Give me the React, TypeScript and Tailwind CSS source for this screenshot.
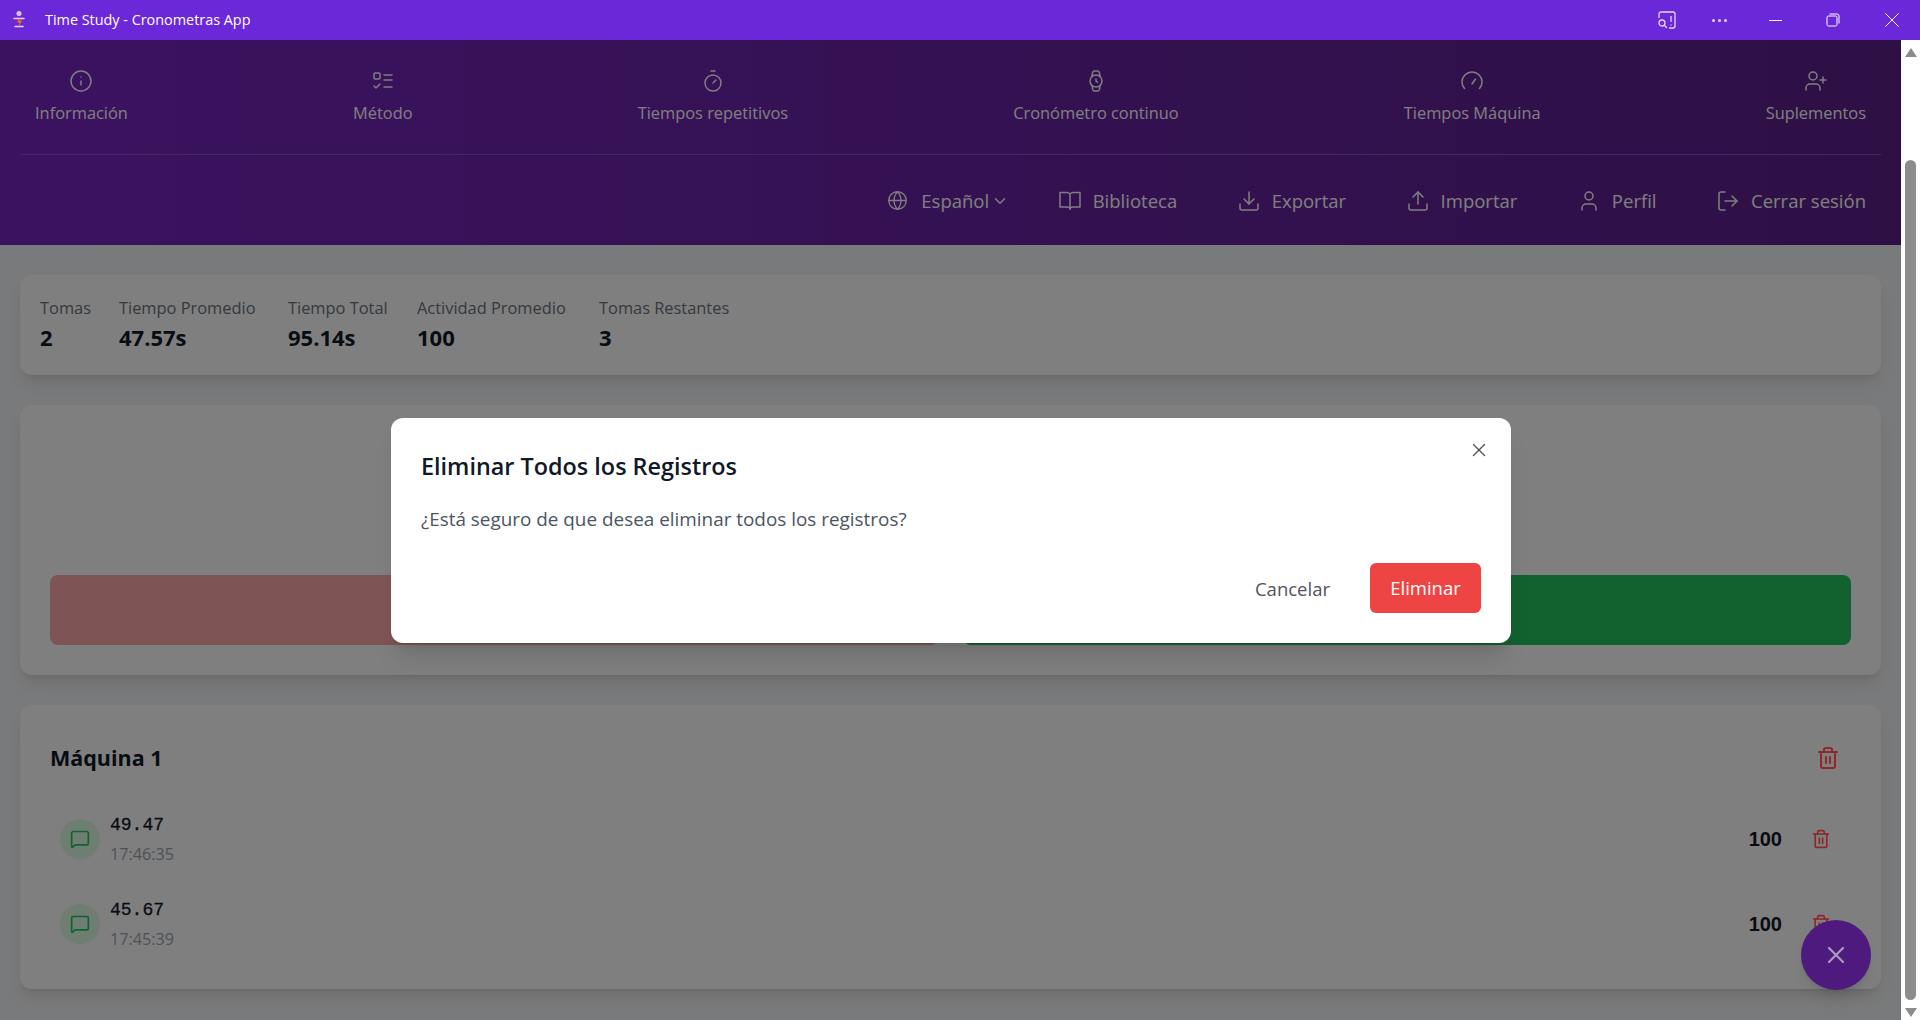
import { ChevronDown, Download, Globe, Info, LogOut, MessageSquare, Timer, Trash2, Upload, User, UserPlus, Watch, X } from "lucide-react";
import type { ReactNode } from "react";

const MethodIcon = () => (
  <svg width="24" height="24" viewBox="0 0 24 24" fill="none" stroke="currentColor" strokeWidth="1.5" strokeLinecap="round" strokeLinejoin="round">
    <rect x="3" y="4" width="6" height="6" rx="1" />
    <path d="M3 17l2 2 4-4" />
    <path d="M13 6h8M13 11h8M13 18h8" />
  </svg>
);

const GaugeIcon = () => (
  <svg width="24" height="24" viewBox="0 0 24 24" fill="none" stroke="currentColor" strokeWidth="1.5" strokeLinecap="round">
    <path d="M4.5 19.5a10 10 0 1 1 15 0" />
    <path d="M12 15l3.5-5" />
  </svg>
);

const BookIcon = () => (
  <svg width="24" height="24" viewBox="0 0 24 24" fill="none" stroke="currentColor" strokeWidth="1.5" strokeLinejoin="round">
    <path d="M12 5v16M12 5c-1-1-2-1.500-3-1.500H2V18h7c1 0 2.500.5 3 1.500.5-1 2-1.500 3-1.500h7V3.500h-7c-1 0-2 .5-3 1.500z" />
  </svg>
);

const AppLogo = () => (
  <svg width="14" height="20" viewBox="0 0 14 20" fill="none">
    <circle cx="7" cy="3.500" r="2.500" fill="#d8c8f0" />
    <path d="M2 8.500h10M3 16.500h8" stroke="#e4daf5" strokeWidth="1.500" strokeLinecap="round" />
    <path d="M8 6.500l-3 6h2.500L6 18l4-7.500H7.500z" fill="#f97316" />
  </svg>
);

const TopTab = ({ icon, label }: { icon: ReactNode; label: string }) => (
  <div className="flex flex-col items-center gap-2 text-white">
    {icon}
    <span className="text-[16.4px] leading-6">{label}</span>
  </div>
);

const SubLink = ({ icon, label }: { icon: ReactNode; label: string }) => (
  <div className="flex items-center gap-[11px] text-white">
    {icon}
    <span className="text-[18.5px] leading-6">{label}</span>
  </div>
);

const Stat = ({ label, value }: { label: string; value: string }) => (
  <div>
    <div className="text-[16.4px] leading-6 text-[#6b7280] whitespace-nowrap">{label}</div>
    <div className="mt-[3px] text-[22px] leading-7 font-bold text-[#111827]">{value}</div>
  </div>
);

const Record = ({ value, time }: { value: string; time: string }) => (
  <div className="flex items-center h-[85px] pl-2.5">
    <div className="flex items-center justify-center w-10 h-10 rounded-full bg-[#dcfce7] text-[#22c55e]">
      <MessageSquare size={20} />
    </div>
    <div className="ml-[10px] pt-[2px]">
      <div className="font-['Liberation_Mono',monospace] text-[18px] leading-6 [-webkit-text-stroke:0.3px] text-[#111827]">{value}</div>
      <div className="mt-[5px] text-[16.2px] leading-6 text-[#9ca3af]">{time}</div>
    </div>
    <div className="ml-auto mr-[29px] font-['Liberation_Sans',sans-serif] text-[20px] font-bold text-[#111827]">100</div>
    <Trash2 size={20} className="relative z-10 mr-5 text-[#8f2828]" />
  </div>
);

export default function App() {
  return (
    <div className="font-['Open_Sans','Noto_Sans',sans-serif] flex flex-col h-[1020px] overflow-hidden bg-white">
      <div className="flex items-center h-10 shrink-0 bg-[#6a28d9] text-white">
        <div className="ml-[11px] flex w-4 justify-center">
          <AppLogo />
        </div>
        <span className="ml-[18px] text-[14.400px]">Time Study - Cronometras App</span>
        <div className="ml-auto flex items-center">
          <svg width="20" height="20" viewBox="0 0 20 20" fill="none" stroke="#e9d5ff" strokeWidth="1.300" className="mr-[35px]">
            <path d="M2 8V4a2 2 0 0 1 2-2h12a2 2 0 0 1 2 2v12a2 2 0 0 1-2 2h-4" />
            <circle cx="5" cy="13" r="3" />
            <path d="M7.500 15.500l2.500 2.500M14 6v6M14 14.500v1" />
          </svg>
          <span className="mr-[42px] flex gap-[3px]">
            <i className="w-[3px] h-[3px] rounded-full bg-[#e9d5ff]" />
            <i className="w-[3px] h-[3px] rounded-full bg-[#e9d5ff]" />
            <i className="w-[3px] h-[3px] rounded-full bg-[#e9d5ff]" />
          </span>
          <i className="mr-[44px] w-[13px] h-px bg-white" />
          <svg width="14" height="14" viewBox="0 0 14 14" fill="none" stroke="white" className="mr-[39px]">
            <rect x="1" y="3" width="10" height="10" rx="1.500" />
            <path d="M3.500 1h7.500a2 2 0 0 1 2 2v7.500" />
          </svg>
          <X size={26} strokeWidth={0.9} className="mr-[15px]" />
        </div>
      </div>

      <div className="flex flex-1 min-h-0">
        <main className="relative flex-1 bg-[#f3f4f6] overflow-hidden">
          <header className="h-[205px] px-5 bg-gradient-to-r from-[#7625c1] to-[#5c208b]">
            <nav className="flex justify-between h-[115px] pt-[29px] px-[15px] border-b border-[#8a50c4]">
              <TopTab icon={<Info size={24} strokeWidth={1.5} />} label="Información" />
              <TopTab icon={<MethodIcon />} label="Método" />
              <TopTab icon={<Timer size={24} strokeWidth={1.5} />} label="Tiempos repetitivos" />
              <TopTab icon={<Watch size={24} strokeWidth={1.5} />} label="Cronómetro continuo" />
              <TopTab icon={<GaugeIcon />} label="Tiempos Máquina" />
              <TopTab icon={<UserPlus size={24} strokeWidth={1.5} />} label="Suplementos" />
            </nav>
            <div className="flex items-center justify-end gap-[59.5px] h-[91px] pr-[15px]">
              <div className="flex items-center -mr-[11px] text-white">
                <Globe size={21} strokeWidth={1.5} className="mr-[13px]" />
                <span className="text-[18.5px] leading-6">Español</span>
                <ChevronDown size={18} className="ml-[2px]" />
              </div>
              <SubLink icon={<BookIcon />} label="Biblioteca" />
              <SubLink icon={<Download size={24} strokeWidth={1.5} />} label="Exportar" />
              <SubLink icon={<Upload size={24} strokeWidth={1.5} />} label="Importar" />
              <SubLink icon={<User size={24} strokeWidth={1.5} />} label="Perfil" />
              <SubLink icon={<LogOut size={24} strokeWidth={1.5} />} label="Cerrar sesión" />
            </div>
          </header>

          <div className="px-5 pt-[30px] flex flex-col gap-[30px]">
            <section className="grid grid-cols-[79px_169px_129px_182px_auto] h-[100px] px-5 pt-[21px] rounded-xl bg-white shadow-lg">
              <Stat label="Tomas" value="2" />
              <Stat label="Tiempo Promedio" value="47.57s" />
              <Stat label="Tiempo Total" value="95.14s" />
              <Stat label="Actividad Promedio" value="100" />
              <Stat label="Tomas Restantes" value="3" />
            </section>

            <section className="flex items-end gap-6 h-[270px] px-[30px] pb-[30px] rounded-xl bg-white shadow-lg">
              <div className="flex-1 h-[70px] rounded-lg bg-[#ffa8a8]" />
              <div className="flex-1 h-[70px] rounded-lg bg-[#22c55e]" />
            </section>

            <section className="h-[284px] px-[30px] pt-[33px] rounded-xl bg-white shadow-lg">
              <div className="flex items-center justify-between h-[40px] mb-[18px]">
                <h2 className="text-[21.5px] font-bold text-[#111827]">Máquina 1</h2>
                <Trash2 size={24} className="relative z-10 mr-[11px] text-[#8f2828]" />
              </div>
              <Record value="49.47" time="17:46:35" />
              <Record value="45.67" time="17:45:39" />
            </section>
          </div>

          <div className="absolute inset-0 bg-black/50" />

          <div className="absolute z-20 right-[30px] bottom-[30px] flex items-center justify-center w-[70px] h-[70px] rounded-full bg-[#4f1a7d] text-[#a89ab8] shadow-lg">
            <X size={28} />
          </div>

          <div className="absolute z-20 left-[391px] top-[378px] w-[1120px] h-[225px] rounded-xl bg-white px-[30px] pt-[32px] shadow-xl">
            <X size={22} strokeWidth={1.5} className="absolute right-[21px] top-[21px] text-[#52525b]" />
            <h3 className="text-[23.400px] leading-8 font-semibold text-[#111827]">Eliminar Todos los Registros</h3>
            <p className="mt-[23px] text-[18.900px] leading-7 text-[#4b5563]">¿Está seguro de que desea eliminar todos los registros?</p>
            <div className="flex items-center justify-end gap-10 mt-[30px]">
              <span className="pt-[2px] text-[18.500px] text-[#52525b]">Cancelar</span>
              <span className="flex items-center justify-center w-[111px] h-[50px] rounded-md bg-[#ef4444] text-[18.500px] text-white">Eliminar</span>
            </div>
          </div>
        </main>

        <div className="relative w-[19px] shrink-0 bg-white">
          <div className="absolute left-1 top-2 w-0 h-0 border-x-[6px] border-x-transparent border-b-[9px] border-b-[#8c8c8c]" />
          <div className="absolute left-[4px] top-[120px] bottom-[20px] w-[11px] rounded-full bg-[#8c8c8c]" />
          <div className="absolute left-1 bottom-[3px] w-0 h-0 border-x-[6px] border-x-transparent border-t-[9px] border-t-[#8c8c8c]" />
        </div>
      </div>
    </div>
  );
}
